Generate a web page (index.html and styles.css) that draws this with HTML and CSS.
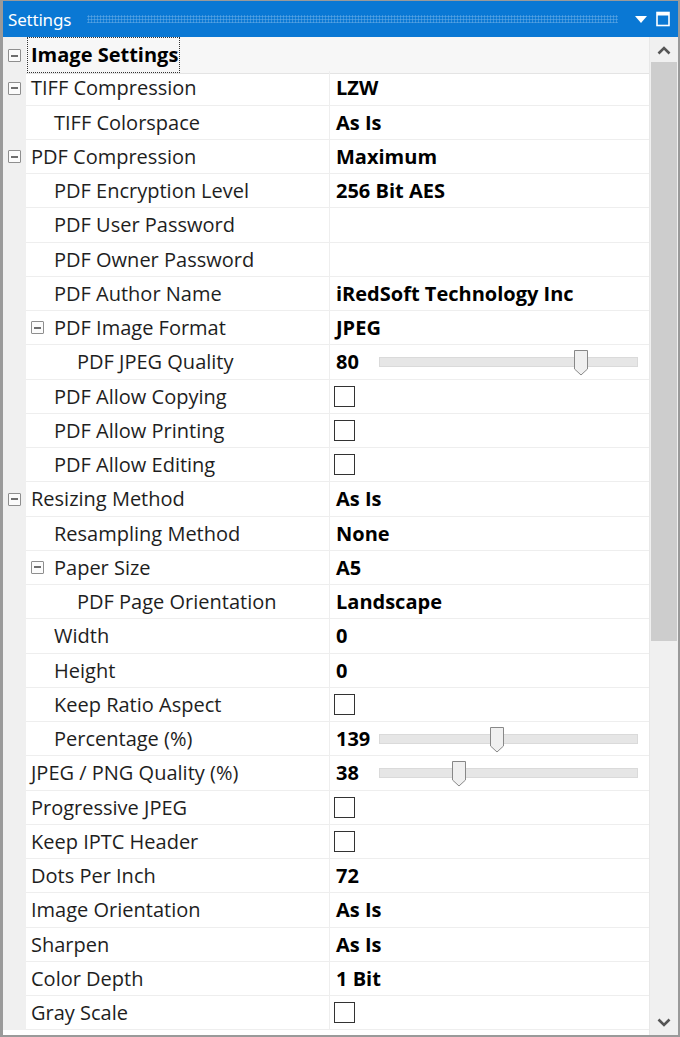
FILE: index.html
```html
<!DOCTYPE html>
<html>
<head>
<meta charset="utf-8">
<link rel="stylesheet" href="styles.css">
</head>
<body>
<div class="window">
  <div class="titlebar">
    <span class="title">Settings</span>
    <span class="grip"></span>
    <svg class="tb-icon" width="14" height="10" viewBox="0 0 14 10"><path d="M1 2 L13 2 L7 9 Z" fill="#fff"/></svg>
    <svg class="tb-icon" width="14" height="16" viewBox="0 0 14 16"><rect x="1" y="1.5" width="12" height="13" fill="none" stroke="#fff" stroke-width="1.6"/><rect x="1" y="1" width="12" height="3.5" fill="#fff"/></svg>
  </div>
  <div class="content">
    <div class="grid">
      <div class="row cat">
        <div class="gutter"><span class="exp"></span></div>
        <div class="cat-name"><span class="focus">Image Settings</span></div>
      </div>
      <div class="row">
        <div class="gutter"><span class="exp"></span></div>
        <div class="name l0">TIFF Compression</div>
        <div class="val">LZW</div>
      </div>
      <div class="row">
        <div class="gutter"></div>
        <div class="name l1">TIFF Colorspace</div>
        <div class="val">As Is</div>
      </div>
      <div class="row">
        <div class="gutter"><span class="exp"></span></div>
        <div class="name l0">PDF Compression</div>
        <div class="val">Maximum</div>
      </div>
      <div class="row">
        <div class="gutter"></div>
        <div class="name l1">PDF Encryption Level</div>
        <div class="val">256 Bit AES</div>
      </div>
      <div class="row">
        <div class="gutter"></div>
        <div class="name l1">PDF User Password</div>
        <div class="val"></div>
      </div>
      <div class="row">
        <div class="gutter"></div>
        <div class="name l1">PDF Owner Password</div>
        <div class="val"></div>
      </div>
      <div class="row">
        <div class="gutter"></div>
        <div class="name l1">PDF Author Name</div>
        <div class="val">iRedSoft Technology Inc</div>
      </div>
      <div class="row">
        <div class="gutter"></div>
        <div class="name l1e"><span class="exp"></span>PDF Image Format</div>
        <div class="val">JPEG</div>
      </div>
      <div class="row">
        <div class="gutter"></div>
        <div class="name l2">PDF JPEG Quality</div>
        <div class="val slider"><span class="num">80</span><span class="track"><span class="thumb" style="left: 194px"></span></span></div>
      </div>
      <div class="row">
        <div class="gutter"></div>
        <div class="name l1">PDF Allow Copying</div>
        <div class="val"><span class="check"></span></div>
      </div>
      <div class="row">
        <div class="gutter"></div>
        <div class="name l1">PDF Allow Printing</div>
        <div class="val"><span class="check"></span></div>
      </div>
      <div class="row">
        <div class="gutter"></div>
        <div class="name l1">PDF Allow Editing</div>
        <div class="val"><span class="check"></span></div>
      </div>
      <div class="row">
        <div class="gutter"><span class="exp"></span></div>
        <div class="name l0">Resizing Method</div>
        <div class="val">As Is</div>
      </div>
      <div class="row">
        <div class="gutter"></div>
        <div class="name l1">Resampling Method</div>
        <div class="val">None</div>
      </div>
      <div class="row">
        <div class="gutter"></div>
        <div class="name l1e"><span class="exp"></span>Paper Size</div>
        <div class="val">A5</div>
      </div>
      <div class="row">
        <div class="gutter"></div>
        <div class="name l2">PDF Page Orientation</div>
        <div class="val">Landscape</div>
      </div>
      <div class="row">
        <div class="gutter"></div>
        <div class="name l1">Width</div>
        <div class="val">0</div>
      </div>
      <div class="row">
        <div class="gutter"></div>
        <div class="name l1">Height</div>
        <div class="val">0</div>
      </div>
      <div class="row">
        <div class="gutter"></div>
        <div class="name l1">Keep Ratio Aspect</div>
        <div class="val"><span class="check"></span></div>
      </div>
      <div class="row">
        <div class="gutter"></div>
        <div class="name l1">Percentage (%)</div>
        <div class="val slider"><span class="num">139</span><span class="track"><span class="thumb" style="left: 110px"></span></span></div>
      </div>
      <div class="row">
        <div class="gutter"></div>
        <div class="name l0">JPEG / PNG Quality (%)</div>
        <div class="val slider"><span class="num">38</span><span class="track"><span class="thumb" style="left: 72px"></span></span></div>
      </div>
      <div class="row">
        <div class="gutter"></div>
        <div class="name l0">Progressive JPEG</div>
        <div class="val"><span class="check"></span></div>
      </div>
      <div class="row">
        <div class="gutter"></div>
        <div class="name l0">Keep IPTC Header</div>
        <div class="val"><span class="check"></span></div>
      </div>
      <div class="row">
        <div class="gutter"></div>
        <div class="name l0">Dots Per Inch</div>
        <div class="val">72</div>
      </div>
      <div class="row">
        <div class="gutter"></div>
        <div class="name l0">Image Orientation</div>
        <div class="val">As Is</div>
      </div>
      <div class="row">
        <div class="gutter"></div>
        <div class="name l0">Sharpen</div>
        <div class="val">As Is</div>
      </div>
      <div class="row">
        <div class="gutter"></div>
        <div class="name l0">Color Depth</div>
        <div class="val">1 Bit</div>
      </div>
      <div class="row">
        <div class="gutter"></div>
        <div class="name l0">Gray Scale</div>
        <div class="val"><span class="check"></span></div>
      </div>
    </div>
    <div class="scrollbar">
      <div class="sb-btn"><svg width="14" height="10" viewBox="0 0 14 10"><path d="M1.5 8.5 L7 3 L12.5 8.5" fill="none" stroke="#555" stroke-width="2.6"/></svg></div>
      <div class="sb-track"><div class="sb-thumb"></div></div>
      <div class="sb-btn"><svg width="14" height="10" viewBox="0 0 14 10"><path d="M1.5 1.5 L7 7 L12.5 1.5" fill="none" stroke="#555" stroke-width="2.6"/></svg></div>
    </div>
  </div>
</div>
</body>
</html>
```

FILE: styles.css
```css
html, body {
  margin: 0;
  padding: 0;
  background: #ffffff;
}

.window {
  width: 680px;
  height: 1037px;
  box-sizing: border-box;
  border: 2px solid #9a9a9a;
  border-left-width: 3px;
  border-top: 1px solid #9a9a9a;
  display: flex;
  flex-direction: column;
  background: #f0f0f0;
  font-family: "Open Sans", "Noto Sans", sans-serif;
  overflow: hidden;
}

.titlebar {
  height: 36px;
  flex: none;
  background: #0a78d4;
  display: flex;
  align-items: center;
  padding: 0 8px 0 5px;
  gap: 8px;
  color: #ffffff;
}

.title {
  font-family: "Noto Sans", sans-serif;
  font-size: 17px;
  letter-spacing: -0.2px;
}

.grip {
  flex: 1;
  height: 8px;
  margin: 0 8px 0 8px;
  background-image: radial-gradient(circle, rgba(255, 255, 255, 0.3) 0.9px, transparent 1.2px);
  background-size: 3px 3px;
}

.tb-icon {
  display: block;
  flex: none;
}

.content {
  flex: 1;
  display: flex;
  min-height: 0;
}

.grid {
  flex: 1;
  display: flex;
  flex-direction: column;
  background: #ffffff;
}

.row {
  height: 34.25px;
  flex: none;
  display: grid;
  grid-template-columns: 23px 304px 1fr;
  box-sizing: border-box;
  font-size: 20px;
  color: #1e1e1e;
}

.gutter {
  background: #f0f0f0;
  display: flex;
  align-items: center;
  justify-content: center;
}

.exp {
  display: inline-block;
  width: 11px;
  height: 11px;
  border: 1px solid #8e8e8e;
  border-radius: 1px;
  background: linear-gradient(#6e6e6e, #6e6e6e) center / 7px 2px no-repeat #fbfbfb;
  flex: none;
}

.name {
  display: flex;
  align-items: center;
  border-bottom: 1px solid #eeeeee;
  border-right: 1px solid #eeeeee;
  white-space: nowrap;
}

.l0 { padding-left: 5px; }
.l1 { padding-left: 28px; }
.l2 { padding-left: 51px; }
.l1e { padding-left: 5px; gap: 10px; }

.val {
  display: flex;
  align-items: center;
  padding-left: 6px;
  border-bottom: 1px solid #eeeeee;
  font-weight: 700;
  color: #000000;
  white-space: nowrap;
}

.cat {
  grid-template-columns: 23px 1fr;
  background: #f5f5f5;
}

.cat-name {
  display: flex;
  align-items: center;
  padding-left: 1px;
  border-bottom: 1px solid #e4e4e4;
  background: #f7f7f7;
}

.focus {
  font-weight: 700;
  color: #000000;
  padding: 3px 1px 4px 3px;
  border: 1px dotted #333333;
}

.check {
  display: block;
  width: 19px;
  height: 19px;
  border: 1px solid #333333;
  background: #ffffff;
  margin-left: -2px;
}

.slider .num {
  width: 43px;
  flex: none;
}

.track {
  position: relative;
  width: 259px;
  height: 10px;
  background: #e6e6e6;
  border: 1px solid #dadada;
  box-sizing: border-box;
}

.thumb {
  position: absolute;
  top: -8px;
  width: 14px;
  height: 26px;
  background: url("data:image/svg+xml;utf8,<svg xmlns='http://www.w3.org/2000/svg' width='14' height='26' viewBox='0 0 14 26'><path d='M0.5 0.5 H13.5 V19 L7 25 L0.5 19 Z' fill='%23f0f0f0' stroke='%23888' stroke-width='1'/></svg>") no-repeat;
}

.scrollbar {
  width: 28px;
  flex: none;
  background: #f0f0f0;
  display: flex;
  flex-direction: column;
  border-left: 1px solid #e8e8e8;
}

.sb-btn {
  height: 25px;
  flex: none;
  display: flex;
  align-items: center;
  justify-content: center;
}

.sb-track {
  flex: 1;
  padding: 0 1px;
}

.sb-thumb {
  height: 579px;
  background: #cdcdcd;
}
```
